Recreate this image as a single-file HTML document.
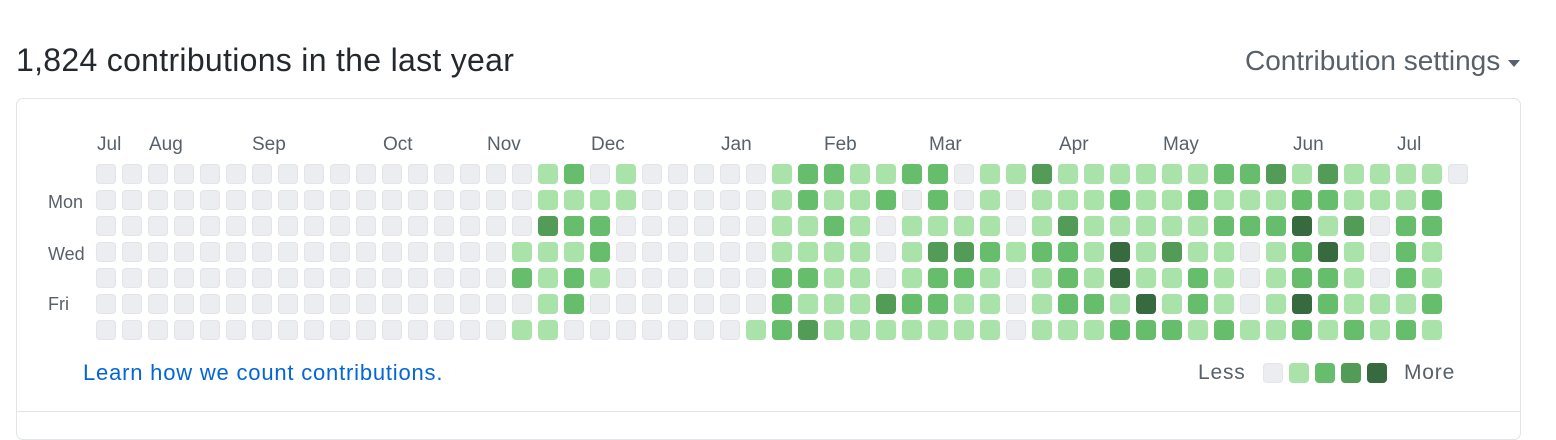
<!DOCTYPE html>
<html><head><meta charset="utf-8"><style>
body{margin:0;width:1556px;height:424px;background:#fff;font-family:"Liberation Sans",Arial,sans-serif;position:relative;overflow:hidden}
.a{position:absolute;white-space:nowrap}
.t{left:16px;top:40px;font-size:32px;letter-spacing:0.3px;color:#24292e;line-height:40px}
.s{left:1245px;top:44px;font-size:28px;color:#586069;line-height:34px}
.car{left:1508px;top:60px;width:0;height:0;border-left:6.5px solid transparent;border-right:6.5px solid transparent;border-top:7px solid #586069}
.box{left:16px;top:98px;width:1503px;height:340px;border:1px solid #e1e4e8;border-radius:7px}
.hr{left:17px;top:411px;width:1503px;height:1px;background:#e1e4e8}
.m{font-size:19px;color:#586069;top:134px;line-height:22px}
.d{font-size:18px;color:#586069;left:48px;line-height:22px}
.c{position:absolute;width:20px;height:20px;border-radius:4px}
.l0{background:#ebedf0;box-shadow:inset 0 0 0 1px #e3e5e9}
.l1{background:#aae3aa}.l2{background:#66bd6b}.l3{background:#529c57}.l4{background:#376b3f}
.lk{left:83px;top:360px;font-size:22px;letter-spacing:0.8px;color:#0366d6;line-height:26px}
.lg{top:360px;font-size:21px;letter-spacing:0.8px;color:#586069;line-height:26px}
</style></head><body>
<div class="a t">1,824 contributions in the last year</div>
<div class="a s">Contribution settings</div>
<div class="a car"></div>
<div class="a box"></div>
<div class="a hr"></div>
<div class="a m" style="left:97px">Jul</div>
<div class="a m" style="left:149px">Aug</div>
<div class="a m" style="left:252px">Sep</div>
<div class="a m" style="left:383px">Oct</div>
<div class="a m" style="left:487px">Nov</div>
<div class="a m" style="left:591px">Dec</div>
<div class="a m" style="left:721px">Jan</div>
<div class="a m" style="left:824px">Feb</div>
<div class="a m" style="left:929px">Mar</div>
<div class="a m" style="left:1059px">Apr</div>
<div class="a m" style="left:1163px">May</div>
<div class="a m" style="left:1293px">Jun</div>
<div class="a m" style="left:1397px">Jul</div>
<div class="a d" style="top:191px">Mon</div>
<div class="a d" style="top:243px">Wed</div>
<div class="a d" style="top:293px">Fri</div>
<div id="g"></div>
<div class="a lk">Learn how we count contributions.</div>
<div class="a lg" style="left:1198px">Less</div>
<div class="c l0" style="left:1263px;top:363px"></div>
<div class="c l1" style="left:1289px;top:363px"></div>
<div class="c l2" style="left:1315px;top:363px"></div>
<div class="c l3" style="left:1341px;top:363px"></div>
<div class="c l4" style="left:1367px;top:363px"></div>
<div class="a lg" style="left:1404px">More</div>
<script>
var z="000000000000000";
var R=[z+"00120100000"+"1221122"+"0113111111"+"2231311110",
z+"00111100000"+"1211202"+"0101112112"+"111221112",
z+"00322000000"+"1121011"+"1101311111"+"222413022",
z+"01112000000"+"1111013"+"3212214131"+"101241021",
z+"02121000000"+"2211012"+"2101214112"+"101221021",
z+"00120000000"+"2111322"+"1101221412"+"101421112",
z+"01100000001"+"2311111"+"1101112221"+"211212121"];
var h="";
for(var r=0;r<7;r++)for(var c=0;c<R[r].length;c++)h+='<div class="c l'+R[r][c]+'" style="left:'+(96+26*c)+'px;top:'+(164+26*r)+'px"></div>';
document.getElementById("g").innerHTML=h;
</script>
</body></html>
